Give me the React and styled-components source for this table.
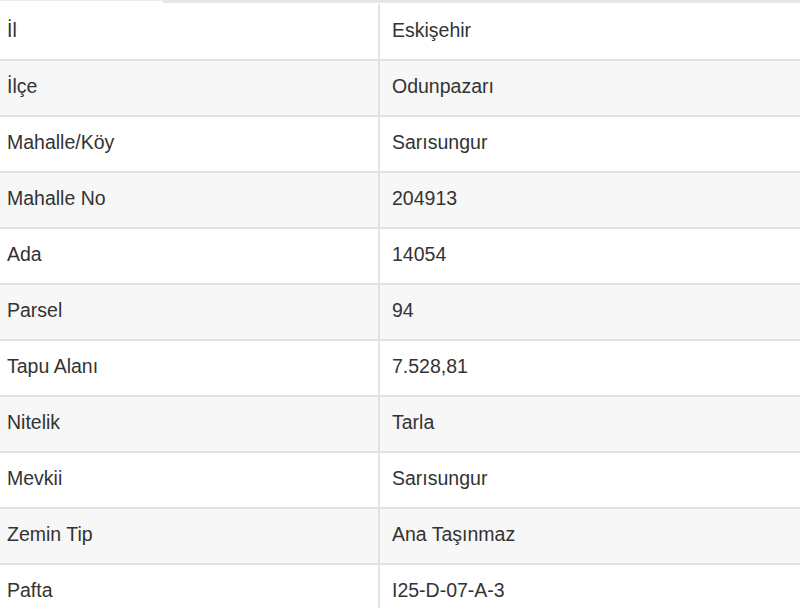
import styled, { createGlobalStyle } from "styled-components";

const GlobalStyle = createGlobalStyle`
  html, body {
    margin: 0;
    padding: 0;
    background: #fff;
    overflow: hidden;
  }
  body {
    font-family: "Liberation Sans", Arial, sans-serif;
    color: #333;
  }
`;

const Page = styled.div`
  width: 800px;
  height: 608px;
  overflow: hidden;
`;

const TabStrip = styled.div`
  display: flex;
  align-items: flex-start;
  height: 4px;
`;

const ActiveTab = styled.div`
  width: 163px;
  height: 4px;
  background: #fff;
  border-top: 1px solid #ececec;
  box-sizing: border-box;
`;

const TabLine = styled.div`
  flex: 1;
  height: 3px;
  background: #e6e6e6;
`;

const Table = styled.table`
  width: 100%;
  table-layout: fixed;
  border-collapse: separate;
  border-spacing: 0;
  font-size: 19.5px;
  line-height: 28px;
`;

const Row = styled.tr`
  background: ${(p) => (p.$striped ? "#f7f7f7" : "#fff")};

  &:first-child td {
    border-top: none;
    padding-top: 12px;
  }
`;

const Cell = styled.td`
  box-sizing: border-box;
  padding: 11px 12px 15px;
  border-top: 2px solid #e3e3e3;
  vertical-align: top;
  white-space: nowrap;
  color: #333;
`;

const LabelCell = styled(Cell)`
  width: 380px;
  padding-left: 7px;
  border-right: 2px solid #e3e3e3;
`;

const rows = [
  ["İl", "Eskişehir"],
  ["İlçe", "Odunpazarı"],
  ["Mahalle/Köy", "Sarısungur"],
  ["Mahalle No", "204913"],
  ["Ada", "14054"],
  ["Parsel", "94"],
  ["Tapu Alanı", "7.528,81"],
  ["Nitelik", "Tarla"],
  ["Mevkii", "Sarısungur"],
  ["Zemin Tip", "Ana Taşınmaz"],
  ["Pafta", "I25-D-07-A-3"],
];

export default function App() {
  return (
    <>
      <GlobalStyle />
      <Page>
        <TabStrip>
          <ActiveTab />
          <TabLine />
        </TabStrip>
        <Table>
          <tbody>
            {rows.map(([label, value], i) => (
              <Row key={label} $striped={i % 2 === 1}>
                <LabelCell>{label}</LabelCell>
                <Cell>{value}</Cell>
              </Row>
            ))}
          </tbody>
        </Table>
      </Page>
    </>
  );
}
